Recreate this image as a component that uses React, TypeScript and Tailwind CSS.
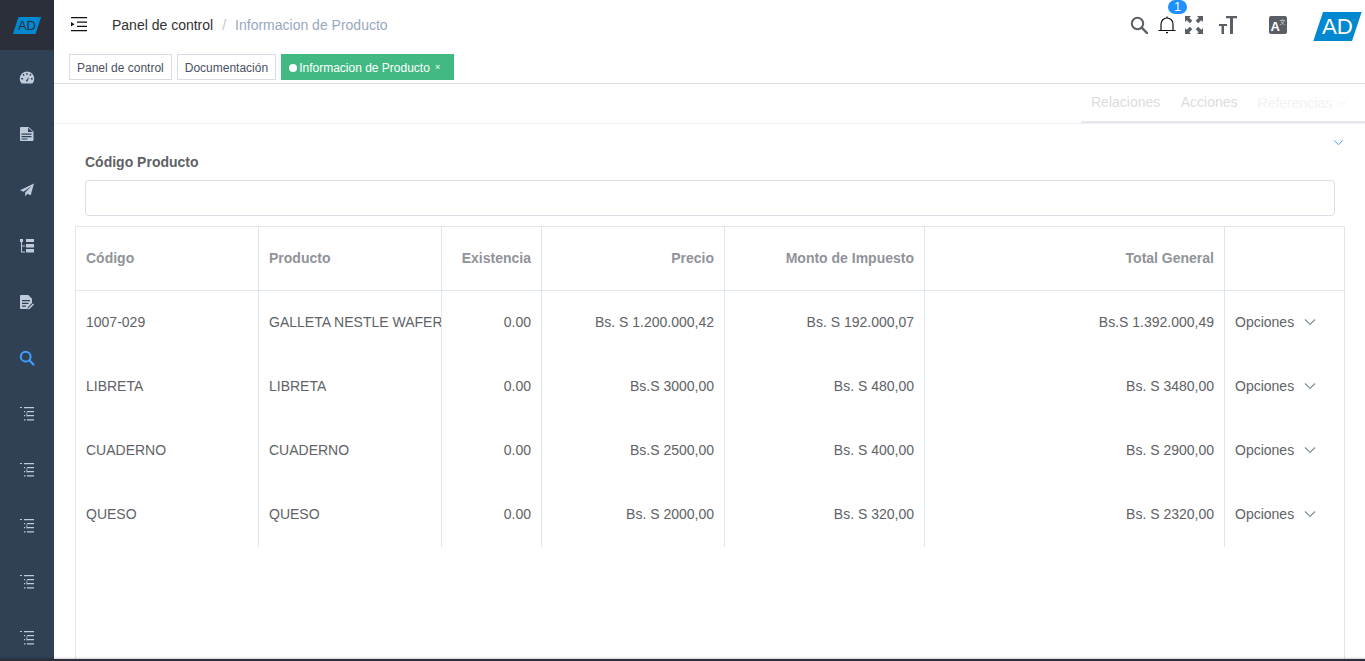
import type { ReactNode } from "react";

const rows = [
  ["1007-029", "GALLETA NESTLE WAFER", "0.00", "Bs. S 1.200.000,42", "Bs. S 192.000,07", "Bs.S 1.392.000,49"],
  ["LIBRETA", "LIBRETA", "0.00", "Bs.S 3000,00", "Bs. S 480,00", "Bs. S 3480,00"],
  ["CUADERNO", "CUADERNO", "0.00", "Bs.S 2500,00", "Bs. S 400,00", "Bs. S 2900,00"],
  ["QUESO", "QUESO", "0.00", "Bs. S 2000,00", "Bs. S 320,00", "Bs. S 2320,00"],
];

const widths = ["w-[183px]", "w-[183px]", "w-[100px]", "w-[183px]", "w-[200px]", "w-[300px]"];

function Logo({ className, color, ink }: { className: string; color: string; ink: string }) {
  return (
    <svg viewBox="0 0 50 30" className={className}>
      <polygon points="10,0 50,0 40,30 0,30" fill={color} />
      <text x="25" y="23" textAnchor="middle" fontSize="23" fill={ink} fontFamily="Liberation Sans, sans-serif">
        AD
      </text>
    </svg>
  );
}

function Chevron({ className }: { className: string }) {
  return (
    <svg viewBox="0 0 12 8" fill="none" stroke="currentColor" strokeWidth="1.1" className={className}>
      <path d="M1 1.5 L6 6.5 L11 1.5" />
    </svg>
  );
}

function SideIcon({ children, active }: { children: ReactNode; active?: boolean }) {
  return (
    <div className="flex h-[56px] shrink-0 items-center justify-center">
      <svg viewBox="0 0 16 16" className={active ? "h-[16px] w-[16px] text-[#409eff]" : "h-[16px] w-[16px] text-[#bfcbd9]"}>
        {children}
      </svg>
    </div>
  );
}

function TreeList() {
  return (
    <SideIcon>
      <path
        fill="currentColor"
        d="M1 1h2v1H1zM5 1h10v1.2H5zM5 5h1.2v1.2H5zM8 5h7v1.2H8zM5 9h1.2v1.2H5zM8 9h7v1.2H8zM5 13.3h1.5v1.2H5zM8 13.3h7v1.2H8z"
      />
      <path fill="currentColor" opacity="0.5" d="M7 6.5h1.5v4H7z" />
    </SideIcon>
  );
}

function Sidebar() {
  return (
    <aside className="flex w-[54px] shrink-0 flex-col bg-[#304156]">
      <div className="flex h-[50px] shrink-0 items-center justify-center bg-[#2b2f3a]">
        <Logo className="h-[17px] w-[30px]" color="#0288d1" ink="#2b2f3a" />
      </div>
      <SideIcon>
        <path
          fill="currentColor"
          fillRule="evenodd"
          d="M8 1.5a7.2 7.2 0 0 0-7.2 7.2c0 1.6.5 3.1 1.4 4.3.2.3.5.5.8.5h10c.3 0 .6-.2.8-.5.9-1.2 1.4-2.7 1.4-4.3A7.2 7.2 0 0 0 8 1.5zM7.3 2.9h1.4v1.8H7.3zM3.5 4.7l1-1 1.2 1.3-1 1zM2.3 8.1h1.8v1.4H2.3zM11.9 8.1h1.8v1.4h-1.8zM10.3 5l1.2-1.3 1 1-1.2 1.3zM7 11.7c-.2-.6 0-1.2.4-1.6l2.6-3-1.2 3.7c-.2.6-.7.9-1.2.8-.3 0-.5-.4-.6-.9z"
        />
      </SideIcon>
      <SideIcon>
        <path
          fill="currentColor"
          fillRule="evenodd"
          d="M2 1h7.5l5 4.5V14a1 1 0 0 1-1 1H2a1 1 0 0 1-1-1V2a1 1 0 0 1 1-1zM9 1.8V6h5zM2.5 7.5v1.2h10V7.5zM2.5 10v1.2h10V10zM2.5 12.4v1h6v-1z"
        />
      </SideIcon>
      <SideIcon>
        <path fill="currentColor" d="M15 1.5 1 8.2l3.6 1.6L12.5 4 6.2 10.6v3.9l2.2-2.8 3.3 1.5z" />
      </SideIcon>
      <SideIcon>
        <path
          fill="currentColor"
          d="M1 1h3v3H1zM7 1h8v3H7zM7 6h8v3.5H7zM7 11h8v3.5H7zM2 4h1v9.5h3v1H2zM3 7.5h3v1H3z"
        />
      </SideIcon>
      <SideIcon>
        <path
          fill="currentColor"
          fillRule="evenodd"
          d="M2 1h7.3l3.7 3.7v4.2l-4 4.1-.5 2H2a1 1 0 0 1-1-1V2a1 1 0 0 1 1-1zM3 6v1.2h8V6zM3 8.8V10h6.5V8.8zM3 11.5v1.2h4v-1.2zM14 9.6l1 1-4.5 4.5-1.5.4.4-1.4z"
        />
      </SideIcon>
      <SideIcon active>
        <circle cx="6.7" cy="6.7" r="4.9" fill="none" stroke="currentColor" strokeWidth="2" />
        <path d="M10.3 10.3 14.5 14.5" stroke="currentColor" strokeWidth="2.2" strokeLinecap="round" />
      </SideIcon>
      <TreeList />
      <TreeList />
      <TreeList />
      <TreeList />
      <TreeList />
    </aside>
  );
}

function Navbar() {
  return (
    <header className="flex h-[50px] shrink-0 items-center bg-white pl-[17px] shadow-[0_1px_4px_rgba(0,21,41,0.08)]">
      <svg viewBox="0 0 16 16" className="h-[16px] w-[16px] text-[#111]">
        <path fill="currentColor" d="M0 0h16v1.2H0zM0 13h16v1.2H0zM6 4.5h10v1.2H6zM6 8.8h10v1.2H6zM0 5l3.5 2.3L0 9.6z" />
      </svg>
      <div className="ml-[25px] flex text-[14px]">
        <span className="text-[#303133]">Panel de control</span>
        <span className="mx-[9px] text-[#c0c4cc]">/</span>
        <span className="text-[#97a8be]">Informacion de Producto</span>
      </div>
      <div className="ml-auto flex items-center">
        <svg viewBox="0 0 18 18" className="h-[18px] w-[18px] text-[#5a5e66]">
          <circle cx="7.5" cy="7.5" r="5.7" fill="none" stroke="currentColor" strokeWidth="2" />
          <path d="M11.7 11.7 17 17" stroke="currentColor" strokeWidth="2.4" strokeLinecap="round" />
        </svg>
        <div className="relative ml-[10px] h-[18px] w-[18px]">
          <svg viewBox="0 0 18 18" className="h-[18px] w-[18px]" fill="none" stroke="#111" strokeWidth="1.2">
            <path d="M.5 14.5h17M3 14.5V8a6 6 0 0 1 12 0v6.5" />
            <path d="M9 .5V2M8 16.7h2" />
          </svg>
          <span className="absolute left-[10px] top-[-16px] flex h-[14px] w-[19px] items-center justify-center rounded-full bg-[#1e90ff] text-[12px] text-white">
            1
          </span>
        </div>
        <svg viewBox="0 0 18 18" className="ml-[9px] h-[18px] w-[18px] text-[#5a5e66]" fill="currentColor">
          <path d="M0 0h6L4.3 1.8l3 3-2.5 2.5-3-3L0 6zM18 0v6l-1.8-1.7-3 3-2.5-2.5 3-3L12 0zM0 18v-6l1.8 1.7 3-3 2.5 2.5-3 3L6 18zM18 18h-6l1.7-1.8-3-3 2.5-2.5 3 3L18 12z" />
        </svg>
        <svg viewBox="0 0 18 18" className="ml-[16px] h-[18px] w-[18px] text-[#5a5e66]" fill="currentColor">
          <path d="M7 0H18v2.2h-4V18h-3V2.2H7zM0 8h8v2H5v8H2.5V10H0z" />
        </svg>
        <svg viewBox="0 0 18 18" className="ml-[32px] h-[18px] w-[18px]">
          <rect width="18" height="18" rx="2" fill="#5a5e66" />
          <text x="1.5" y="14.5" fontSize="13" fontWeight="700" fill="#fff" fontFamily="Liberation Sans, sans-serif">
            A
          </text>
          <text x="10.5" y="8" fontSize="6" fill="#ddd" fontFamily="Noto Sans CJK SC, sans-serif">
            文
          </text>
        </svg>
        <Logo className="ml-[26px] mr-[3px] mt-[3px] h-[29px] w-[49px]" color="#0288d1" ink="#fff" />
      </div>
    </header>
  );
}

function Tags() {
  const tag = "flex h-[26px] items-center border border-[#d8dce5] bg-white px-[7px] pt-[1px] text-[12px] text-[#495060]";
  return (
    <div className="flex h-[34px] shrink-0 items-start gap-[5px] border-b border-[#d8dce5] bg-white pl-[15px] pt-[4px]">
      <div className={tag}>Panel de control</div>
      <div className={tag}>Documentación</div>
      <div className="flex h-[26px] items-center bg-[#42b983] pl-[8px] pr-[14px] pt-[1px] text-[12px] text-white">
        <span className="mr-[2px] h-[8px] w-[8px] rounded-full bg-white" />
        Informacion de Producto
        <span className="ml-[5px] text-[9px] leading-none">×</span>
      </div>
    </div>
  );
}

function Tabs() {
  return (
    <div className="flex h-[40px] shrink-0 justify-end border-b border-[#eef0f5] bg-white">
      <div className="flex w-[284px] items-center border-b-2 border-[#e4e7ed] pl-[10px] text-[14px]">
        <span className="text-[#dcdcdc]">Relaciones</span>
        <span className="ml-[20.5px] text-[#dcdcdc]">Acciones</span>
        <span className="ml-[20px] mt-[1px] text-[#f2f2f2]">Referencias</span>
        <Chevron className="ml-[5px] h-[6px] w-[10px] text-[#f0f0f0]" />
      </div>
    </div>
  );
}

function Table() {
  const head = ["Código", "Producto", "Existencia", "Precio", "Monto de Impuesto", "Total General"];
  return (
    <div className="ml-[21px] mr-[20px] mt-[10px] flex-1 border-x border-t border-[#dfe6ec] text-[14px]">
      <div className="flex h-[64px] border-b border-[#dfe6ec] font-bold text-[#909399]">
        {head.map((h, i) => (
          <div
            key={h}
            className={`${widths[i]} flex items-center border-r border-[#dfe6ec] px-[10px] ${i > 1 ? "justify-end" : ""}`}
          >
            {h}
          </div>
        ))}
        <div className="w-[119px]" />
      </div>
      <div className="-mt-px">
        {rows.map((row) => (
          <div key={row[0]} className="flex h-[64px] text-[#606266] last:h-[65px] [&:last-child>div]:pb-px">
            {row.map((c, i) => (
              <div
                key={i}
                className={`${widths[i]} flex items-center overflow-hidden whitespace-nowrap border-r border-[#dfe6ec] px-[10px] ${i === 1 ? "pr-0" : ""} ${i > 1 ? "justify-end" : ""}`}
              >
                {c}
              </div>
            ))}
            <div className="flex w-[119px] items-center pl-[10px]">
              Opciones
              <Chevron className="ml-[10px] h-[8px] w-[12px] text-[#7f8c9c]" />
            </div>
          </div>
        ))}
      </div>
    </div>
  );
}

export default function App() {
  return (
    <div className="relative flex h-[661px] overflow-hidden bg-white font-['Liberation_Sans',sans-serif]">
      <Sidebar />
      <div className="flex min-w-0 flex-1 flex-col">
        <Navbar />
        <Tags />
        <Tabs />
        <div className="flex justify-end pr-[21px] pt-[15px]">
          <Chevron className="h-[7px] w-[11px] text-[#409eff]" />
        </div>
        <label className="ml-[31px] mt-[6px] text-[14px] font-bold leading-[20px] text-[#606266]">Código Producto</label>
        <div className="ml-[31px] mr-[30px] mt-[8px] h-[36px] shrink-0 rounded-[4px] border border-[#dcdfe6]" />
        <Table />
      </div>
      <div className="absolute inset-x-0 bottom-0 h-[2px] bg-[#2b2f3a] shadow-[0_-1px_2px_rgba(0,0,0,0.2)]" />
    </div>
  );
}
